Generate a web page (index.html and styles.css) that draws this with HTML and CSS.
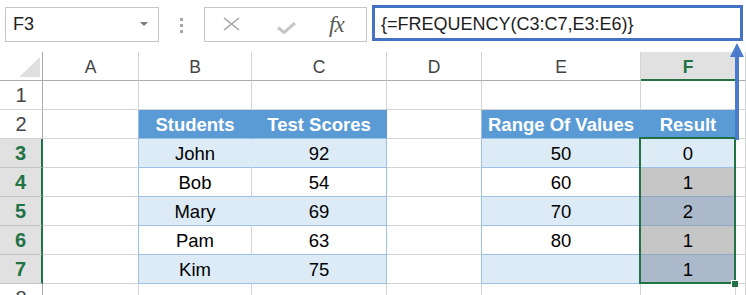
FILE: index.html
```html
<!DOCTYPE html>
<html lang="en">
<head>
    <meta charset="UTF-8">
    <title>FREQUENCY</title>
    <link rel="stylesheet" href="styles.css">
</head>
<body>
    <div class="app">
        <!-- formula bar -->
        <div class="formula-bar">
            <div class="name-box">
                <span>F3</span>
                <svg class="drop" width="8" height="5" viewBox="0 0 8 5"><polygon points="0,0 8,0 4,4" fill="#7a7a7a"/></svg>
            </div>
            <div class="dots"><i></i><i></i><i></i></div>
            <div class="fx-box">
                <svg class="icon-cancel" width="17" height="14" viewBox="0 0 17 14">
                    <path d="M1 1 L16 13 M16 1 L1 13" stroke="#a3a3a3" stroke-width="1.6" fill="none"/>
                </svg>
                <svg class="icon-enter" width="19" height="12" viewBox="0 0 19 12">
                    <path d="M1 5.5 L7 10.5 L18 1" stroke="#c6c6c6" stroke-width="3" fill="none"/>
                </svg>
                <span class="fx">fx</span>
            </div>
            <div class="formula-input">{=FREQUENCY(C3:C7,E3:E6)}</div>
        </div>

        <!-- worksheet -->
        <div class="sheet">
            <div class="corner">
                <svg width="22" height="21" viewBox="0 0 22 21"><polygon points="21,0 21,20 0,20" fill="#dfdfdf"/></svg>
            </div>
            <div class="col-head">A</div>
            <div class="col-head">B</div>
            <div class="col-head">C</div>
            <div class="col-head">D</div>
            <div class="col-head">E</div>
            <div class="col-head active">F</div>
            <div class="col-head"></div>

            <div class="row-head">1</div>
            <div class="cell"></div>
            <div class="cell"></div>
            <div class="cell"></div>
            <div class="cell"></div>
            <div class="cell"></div>
            <div class="cell"></div>
            <div class="cell"></div>

            <div class="row-head">2</div>
            <div class="cell edge"></div>
            <div class="cell th">Students</div>
            <div class="cell th">Test Scores</div>
            <div class="cell edge"></div>
            <div class="cell th">Range Of Values</div>
            <div class="cell th">Result</div>
            <div class="cell"></div>

            <div class="row-head active">3</div>
            <div class="cell edge"></div>
            <div class="cell band">John</div>
            <div class="cell band last">92</div>
            <div class="cell edge"></div>
            <div class="cell band">50</div>
            <div class="cell band last">0</div>
            <div class="cell"></div>

            <div class="row-head active">4</div>
            <div class="cell edge"></div>
            <div class="cell plain">Bob</div>
            <div class="cell plain last">54</div>
            <div class="cell edge"></div>
            <div class="cell plain">60</div>
            <div class="cell sel">1</div>
            <div class="cell"></div>

            <div class="row-head active">5</div>
            <div class="cell edge"></div>
            <div class="cell band">Mary</div>
            <div class="cell band last">69</div>
            <div class="cell edge"></div>
            <div class="cell band">70</div>
            <div class="cell sel-band">2</div>
            <div class="cell"></div>

            <div class="row-head active">6</div>
            <div class="cell edge"></div>
            <div class="cell plain">Pam</div>
            <div class="cell plain last">63</div>
            <div class="cell edge"></div>
            <div class="cell plain">80</div>
            <div class="cell sel">1</div>
            <div class="cell"></div>

            <div class="row-head active">7</div>
            <div class="cell edge"></div>
            <div class="cell band">Kim</div>
            <div class="cell band last">75</div>
            <div class="cell edge"></div>
            <div class="cell band"></div>
            <div class="cell sel-band">1</div>
            <div class="cell"></div>

            <div class="row-head">8</div>
            <div class="cell"></div>
            <div class="cell"></div>
            <div class="cell"></div>
            <div class="cell"></div>
            <div class="cell"></div>
            <div class="cell"></div>
            <div class="cell"></div>
        </div>

        <!-- selection F3:F7 -->
        <div class="selection"><div class="fill-handle"></div></div>

        <!-- arrow pointing to the formula -->
        <svg class="pointer" width="18" height="100" viewBox="0 0 18 100">
            <polygon points="9,1 16,15 2,15" fill="#4a7bcb"/>
            <rect x="7" y="14" width="4" height="84" fill="#4a7bcb"/>
        </svg>
    </div>
</body>
</html>
```

FILE: styles.css
```css
* {
    margin: 0;
    padding: 0;
    box-sizing: border-box;
}

body {
    font-family: "Liberation Sans", Arial, sans-serif;
    background-color: #fff;
    color: #000;
}

.app {
    position: relative;
    width: 746px;
    height: 295px;
    overflow: hidden;
}

/* formula bar */
.formula-bar {
    display: flex;
    align-items: flex-start;
    height: 52px;
}

.name-box {
    margin: 7px 0 0 5px;
    width: 154px;
    height: 35px;
    border: 1px solid #c6c6c6;
    display: flex;
    align-items: center;
    justify-content: space-between;
    padding: 0 10px 0 7px;
    font-size: 18px;
    line-height: 33px;
    color: #222;
}

.name-box .drop {
    margin-top: -1px;
}

.dots {
    margin: 18px 0 0 21px;
    display: flex;
    flex-direction: column;
    gap: 3px;
}

.dots i {
    display: block;
    width: 3px;
    height: 3px;
    background-color: #a6a6a6;
}

.fx-box {
    margin: 7px 0 0 21px;
    width: 163px;
    height: 35px;
    border: 1px solid #c6c6c6;
    display: flex;
    align-items: center;
    padding-left: 18px;
}

.icon-cancel {
    margin-top: -1px;
}

.icon-enter {
    margin: 7px 0 0 37px;
}

.fx {
    margin-left: 33px;
    font-family: "Liberation Serif", "Times New Roman", serif;
    font-style: italic;
    font-size: 23px;
    color: #595959;
    letter-spacing: -1px;
}

.formula-input {
    margin: 5px 0 0 5px;
    width: 371px;
    height: 36px;
    border: 3px solid #4472c4;
    padding: 3px 0 0 6px;
    font-size: 18px;
    line-height: 27px;
    color: #1e1e1e;
    white-space: nowrap;
}

/* worksheet grid */
.sheet {
    display: grid;
    grid-template-columns: 43px 96px 113px 135px 95px 159px 95px 10px;
    grid-auto-rows: 29px;
}

.corner,
.col-head,
.row-head,
.cell {
    border-right: 1px solid #d4d4d4;
    border-bottom: 1px solid #d4d4d4;
    overflow: hidden;
    white-space: nowrap;
    text-align: center;
}

.corner {
    border-right-color: #ababab;
    border-bottom-color: #ababab;
    padding: 5px 0 0 17px;
}

.col-head {
    border-bottom-color: #ababab;
    font-size: 17.5px;
    padding-top: 2px;
    line-height: 26px;
    color: #444;
}

.col-head.active {
    background-color: #e1e1e1;
    border-bottom: 2px solid #217346;
    color: #217346;
    font-weight: bold;
}

.row-head {
    border-right-color: #ababab;
    font-size: 20px;
    line-height: 28px;
    color: #444;
}

.row-head.active {
    background-color: #e1e1e1;
    border-right: 2px solid #217346;
    border-bottom-color: #c4c4c4;
    color: #217346;
    font-weight: bold;
}

.cell {
    font-size: 18.5px;
    padding-top: 1px;
    line-height: 27px;
}

/* cells just left of a table */
.cell.edge {
    border-right-color: #9bc2e6;
}

/* table header */
.cell.th {
    background-color: #5b9bd5;
    border-right-color: #5b9bd5;
    border-bottom-color: #9bc2e6;
    color: #fff;
    font-weight: bold;
}

/* banded rows */
.cell.band {
    background-color: #ddebf7;
    border-right-color: #ddebf7;
    border-bottom-color: #9bc2e6;
}

.cell.plain {
    border-bottom-color: #9bc2e6;
}

.cell.last {
    border-right-color: #9bc2e6;
}

/* selected result cells */
.cell.sel {
    background-color: #c6c6c6;
    border-bottom-color: #8ea9c4;
}

.cell.sel-band {
    background-color: #acb9ca;
    border-bottom-color: #8ea9c4;
}

.selection {
    position: absolute;
    left: 639px;
    top: 137px;
    width: 97px;
    height: 147px;
    border: 2px solid #217346;
}

.fill-handle {
    position: absolute;
    right: -4px;
    bottom: -5px;
    width: 7px;
    height: 7px;
    background-color: #217346;
    border-top: 1px solid #fff;
    border-left: 1px solid #fff;
}

.pointer {
    position: absolute;
    left: 728px;
    top: 42px;
}
```
